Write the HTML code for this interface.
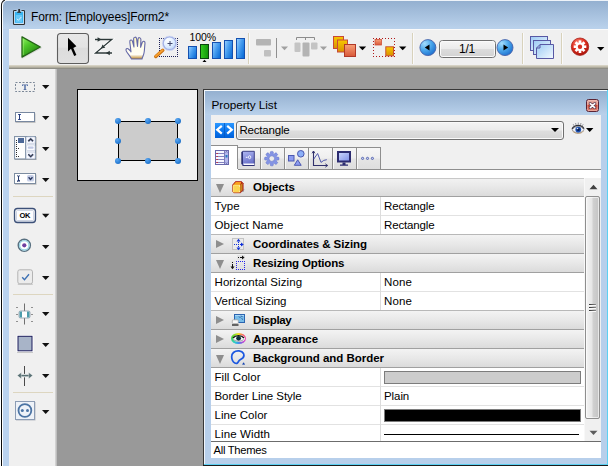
<!DOCTYPE html>
<html>
<head>
<meta charset="utf-8">
<title>Form: [Employees]Form2*</title>
<style>
*{margin:0;padding:0;box-sizing:border-box;}
html,body{width:608px;height:466px;overflow:hidden;background:#999999;}
body{position:relative;font-family:"Liberation Sans",sans-serif;font-size:12px;color:#000;}
.abs{position:absolute;}
.t{position:absolute;white-space:nowrap;line-height:14px;font-size:12px;}
.b{font-weight:bold;}
/* window frame */
#title{left:0;top:0;width:608px;height:29px;background:linear-gradient(to bottom,#eef3f9 0px,#eef3f9 1px,#94b0d0 1px,#a6c0dd 14px,#b9d1eb 28px);}
#lframe{left:0;top:0;width:9px;height:466px;background:linear-gradient(to bottom,rgba(186,210,238,0) 0,rgba(186,210,238,0) 22px,#bad2ee 30px);}
#lframe i{position:absolute;top:0;height:466px;display:block;}
/* toolbar */
#toolbar{left:9px;top:29px;width:599px;height:36px;background:#f0f0f0;border-top:1px solid #fafafa;}
#tbline{left:9px;top:65px;width:599px;height:4px;background:linear-gradient(to bottom,#d6d2c4 0,#d6d2c4 25%,#c4c0b0 25%,#c4c0b0 50%,#aeaa9c 50%,#aeaa9c 75%,#8e8e86 75%,#8e8e86 100%);}
.sep{position:absolute;top:33px;width:2px;height:31px;border-left:1px solid #d8d2bc;border-right:1px solid #fafafa;}
.dd{position:absolute;width:0;height:0;border-left:4px solid transparent;border-right:4px solid transparent;border-top:4px solid #000;}
/* left palette */
#palette{left:9px;top:69px;width:46px;height:397px;background:#f0f0f0;}
#palsep{left:55px;top:69px;width:2px;height:397px;background:linear-gradient(to right,#dcdcdc,#b4b4b4);}
.hsep{position:absolute;left:13px;width:40px;height:1px;background:#ddd6c0;}
/* form */
#form{left:77px;top:89px;width:121px;height:92px;background:#f0f0f0;border:1px solid #000;}
#rect{left:118px;top:121px;width:60px;height:40px;background:#cccccc;border:1px solid #000;}
.h{position:absolute;width:6.200px;height:6.200px;border-radius:50%;background:radial-gradient(circle at 35% 30%,#5aa6f0 0,#2b7fd6 55%,#1b62b4 100%);}
/* property palette */
#pp{left:203px;top:89px;width:405px;height:377px;background:#b7cfeb;}
#ppcontent{left:211px;top:115px;width:390px;height:343px;background:#f0f0f0;}
.row{position:absolute;left:211px;width:373px;height:19px;}
.hd{background:linear-gradient(to bottom,#f3f3f3 0,#e8e8e8 50%,#dbdbdb 100%);border-bottom:1px solid #a0a0a0;}
.pr{background:#fff;border-bottom:1px solid #e2e2e2;}
.tri-d{position:absolute;width:0;height:0;border-left:4.500px solid transparent;border-right:4.500px solid transparent;border-top:9px solid #8e8e8e;}
.tri-r{position:absolute;width:0;height:0;border-top:4.200px solid transparent;border-bottom:4.200px solid transparent;border-left:8.800px solid #8e8e8e;}
/*FIT*/
#pct{font-size:10.5px;letter-spacing:-0.090px}
#pg{font-size:12px;letter-spacing:-0.229px}
#pl{font-size:11.8px;letter-spacing:-0.064px}
#cb{font-size:11.5px;letter-spacing:-0.200px}
#h1{font-size:11.5px;letter-spacing:-0.055px}
#r1{font-size:11.5px;letter-spacing:0.066px}
#r1v{font-size:11.5px;letter-spacing:-0.144px}
#r2{font-size:11.5px;letter-spacing:0.172px}
#r2v{font-size:11.5px;letter-spacing:-0.144px}
#h2{font-size:11.5px;letter-spacing:-0.083px}
#h3{font-size:11.5px;letter-spacing:-0.164px}
#r3{font-size:11.5px;letter-spacing:0.077px}
#r3v{font-size:11.5px;letter-spacing:0.125px}
#r4{font-size:11.5px;letter-spacing:-0.016px}
#r4v{font-size:11.5px;letter-spacing:0.125px}
#h4{font-size:11.5px;letter-spacing:-0.375px}
#h5{font-size:11.5px;letter-spacing:-0.084px}
#h6{font-size:11.5px;letter-spacing:-0.031px}
#r5{font-size:11.5px;letter-spacing:0.073px}
#r6{font-size:11.5px;letter-spacing:-0.072px}
#r6v{font-size:11.5px;letter-spacing:-0.076px}
#r7{font-size:11.5px;letter-spacing:0.058px}
#r8{font-size:11.5px;letter-spacing:0.116px}
#at{font-size:11.2px;letter-spacing:-0.277px}
#ttl{font-size:12px;letter-spacing:-0.089px}
/*ENDFIT*/</style>
</head>
<body>
<div id="title" class="abs"></div>
<div id="lframe" class="abs"><i style="left:0;width:1px;background:#fff"></i><i style="left:1px;width:1px;background:#0a0a0a"></i><i style="left:2px;width:1px;background:#fdfeff"></i></div>
<div id="toolbar" class="abs"></div>
<div id="tbline" class="abs"></div>
<div id="palette" class="abs"></div>
<div id="palsep" class="abs"></div>
<div id="form" class="abs"></div>
<div id="rect" class="abs"></div>
<div id="pp" class="abs"></div>
<div id="ppcontent" class="abs"></div>

<!-- toolbar items -->
<svg class="abs" style="left:9px;top:29px" width="599" height="36" viewBox="9 29 599 36">
<defs>
<linearGradient id="gplay" x1="0" y1="0" x2="0.700" y2="1"><stop offset="0" stop-color="#98f868"/><stop offset="0.400" stop-color="#50c82c"/><stop offset="1" stop-color="#1c7c0c"/></linearGradient>
<linearGradient id="gbtn" x1="0" y1="0" x2="0" y2="1"><stop offset="0" stop-color="#e8e8e8"/><stop offset="0.450" stop-color="#e3e3e3"/><stop offset="0.500" stop-color="#dcdcdc"/><stop offset="1" stop-color="#e0e0e0"/></linearGradient>
<linearGradient id="gbar" x1="0" y1="0" x2="1" y2="0.700"><stop offset="0" stop-color="#9cd2ff"/><stop offset="0.500" stop-color="#489ef0"/><stop offset="1" stop-color="#1070d8"/></linearGradient>
<linearGradient id="ggreen" x1="0" y1="0" x2="1" y2="0"><stop offset="0" stop-color="#34cc20"/><stop offset="1" stop-color="#0e9408"/></linearGradient>
<linearGradient id="gyel" x1="0" y1="0" x2="0" y2="1"><stop offset="0" stop-color="#f8c800"/><stop offset="1" stop-color="#d89000"/></linearGradient>
<linearGradient id="gora" x1="0" y1="0" x2="0" y2="1"><stop offset="0" stop-color="#f8a078"/><stop offset="1" stop-color="#d85838"/></linearGradient>
<radialGradient id="gball" cx="0.300" cy="0.250" r="0.900"><stop offset="0" stop-color="#a4dcfc"/><stop offset="0.450" stop-color="#4ca8ec"/><stop offset="1" stop-color="#1464c8"/></radialGradient>
<radialGradient id="gred" cx="0.4" cy="0.3" r="0.75"><stop offset="0" stop-color="#ff9080"/><stop offset="0.5" stop-color="#e03020"/><stop offset="1" stop-color="#a01008"/></radialGradient>
<linearGradient id="gfield" x1="0" y1="0" x2="0" y2="1"><stop offset="0" stop-color="#f6f6f6"/><stop offset="0.48" stop-color="#ebebeb"/><stop offset="0.52" stop-color="#dcdcdc"/><stop offset="1" stop-color="#d2d2d2"/></linearGradient>
<linearGradient id="gpage" x1="0" y1="0" x2="1" y2="1"><stop offset="0" stop-color="#9ccaf4"/><stop offset="1" stop-color="#f4faff"/></linearGradient>
</defs>
<!-- play -->
<path d="M22.200 37.200 L22.200 57.500 L40.800 47.700 Z" fill="#999" stroke="#aaa" stroke-width="2" stroke-linejoin="round" opacity="0.350"/><path d="M22 36.900 L22 57.100 L40.300 47 Z" fill="url(#gplay)" stroke="#226414" stroke-width="1.200" stroke-linejoin="round"/><path d="M23.300 38.800 V55" stroke="#a8f080" stroke-width="0.800" opacity="0.700"/>
<!-- selected button -->
<rect x="57.500" y="33.500" width="31" height="30" rx="3.200" fill="url(#gbtn)" stroke="#5e5e5e" stroke-width="1.100"/>
<path d="M68 37.800 V51.500 L71 48.700 L74.200 56 L76.400 55 L73.300 47.900 L76.400 46.300 Z" fill="#000"/>
<!-- Z entry order -->
<g stroke="#ffffff" stroke-width="2.600" fill="none" opacity="0.900"><path d="M95 39.500 H111.800 L95.600 53 H112"/></g>
<g stroke="#2c3838" stroke-width="1.300" fill="none"><path d="M95 39.500 H111.800 L95.600 53 H112"/></g>
<path d="M97.600 37.200 L101.500 39.500 L97.600 41.800 Z M109.800 50.700 L105.900 53 L109.800 55.300 Z M105.300 47.800 L101 48.500 L102.500 44.400 Z" fill="#2c3838"/>
<!-- hand -->
<linearGradient id="ghand" x1="0" y1="0" x2="0" y2="1"><stop offset="0" stop-color="#fff6b0"/><stop offset="0.350" stop-color="#fffde8"/><stop offset="0.800" stop-color="#fffdf6"/><stop offset="0.930" stop-color="#d4b070"/><stop offset="1" stop-color="#a47c34"/></linearGradient>
<path d="M131.500 59 C130 56 128 54 126.500 51.500 C125.300 49.500 126.300 48 128 48.800 C129.300 49.500 130 50.500 131 51.800 L129.800 42 C129.500 39.800 132 39.300 132.500 41.300 L134 47 L133.600 39 C133.500 36.700 136.300 36.500 136.600 38.800 L137.500 46.500 L138 39.300 C138.200 37 140.900 37.200 140.900 39.500 L140.600 47.200 L142.200 42.500 C142.900 40.500 145.400 41.200 145 43.300 C144.500 46.500 144.700 50 144 53 C143.500 55.500 142.500 57 142 59 Z" fill="url(#ghand)" stroke="#6468a8" stroke-width="1.100" stroke-linejoin="round"/>
<!-- magnifier -->
<g stroke="#1c2058" stroke-width="1" stroke-dasharray="1 1" fill="none"><path d="M159 38.500 H178 M159 56.500 H178 M159.500 38 V57 M177.500 38 V57"/></g>
<path d="M155.800 56.500 L162.800 50.300" stroke="#c87010" stroke-width="3.400" stroke-linecap="round"/>
<path d="M155.800 56.200 L162.600 50.200" stroke="#f8a030" stroke-width="1.800" stroke-linecap="round"/>
<radialGradient id="glens" cx="0.350" cy="0.300" r="0.800"><stop offset="0" stop-color="#ffffff"/><stop offset="0.600" stop-color="#dcecff"/><stop offset="1" stop-color="#b0ccf4"/></radialGradient>
<circle cx="169.600" cy="43.300" r="6.600" fill="url(#glens)" stroke="#a4b2e6" stroke-width="1.600"/>
<circle cx="169.500" cy="43.300" r="7.300" fill="none" stroke="#d8e0f4" stroke-width="0.700"/>
<path d="M167.500 43.500 H172.500 M170 41 V46" stroke="#404870" stroke-width="1"/>
<!-- zoom bars -->
<g stroke="#1450b0" stroke-width="1">
<rect x="188.500" y="46.5" width="8" height="12" fill="url(#gbar)"/>
<rect x="212.500" y="42.5" width="8" height="16" fill="url(#gbar)"/>
<rect x="224.500" y="40.500" width="8" height="18" fill="url(#gbar)"/>
<rect x="236.500" y="38.5" width="8" height="20" fill="url(#gbar)"/>
</g>
<rect x="200.500" y="44.500" width="8" height="14" fill="url(#ggreen)" stroke="#0a4410" stroke-width="1"/>
<path d="M202.500 62 L204.500 59.800 L206.500 62 Z" fill="#000"/>
<!-- align disabled -->
<rect x="256" y="39" width="15" height="6.500" rx="1" fill="#b4b4b4"/>
<rect x="264" y="50" width="7" height="6.500" rx="1" fill="#c0c0c0"/>
<path d="M276.500 38 V58" stroke="#909090" stroke-width="1"/>
<path d="M281 46.500 h7 l-3.500 3.800 z" fill="#a0a0a0"/>
<!-- distribute disabled -->
<path d="M296.500 40 V37.500 H314.500 V40 M305.500 37.500 V40" stroke="#8c8c8c" fill="none"/>
<rect x="294.500" y="42.500" width="6" height="9.500" rx="1" fill="#c4c4c4"/>
<rect x="302.500" y="42.500" width="7" height="14" rx="1" fill="#b4b4b4"/>
<rect x="311" y="42.500" width="6.500" height="7" rx="1" fill="#c4c4c4"/>
<path d="M320 46.500 h7 l-3.500 3.800 z" fill="#a0a0a0"/>
<!-- stack -->
<rect x="333.500" y="36.500" width="10" height="12" fill="url(#gyel)" stroke="#c84838"/>
<rect x="337.500" y="40" width="10" height="12" fill="url(#gyel)" stroke="#c84838"/>
<rect x="344.500" y="44.500" width="11" height="12" fill="url(#gora)" stroke="#b03828"/>
<path d="M358.800 46.500 h7.400 l-3.700 3.800 z" fill="#000"/>
<!-- group -->
<g stroke="#b01818" stroke-width="1" stroke-dasharray="1 2" fill="none"><path d="M373 38.500 H395 M373 56.500 H395 M373.500 38 V57 M394.500 38 V57"/></g>
<rect x="375" y="39.500" width="6.500" height="5.500" fill="url(#gora)" stroke="#d05038" stroke-width="0.800"/>
<rect x="385.800" y="46.800" width="7.700" height="9" fill="url(#gyel)" stroke="#c85030" stroke-width="1"/>
<path d="M399 46.500 h7.400 l-3.700 3.800 z" fill="#000"/>
<!-- nav -->
<circle cx="427.900" cy="47.600" r="8" fill="url(#gball)" stroke="#4a62a8" stroke-width="0.900"/>
<path d="M429.500 44.400 V50.600 L424.800 47.500 Z" fill="#000"/>
<rect x="439.500" y="40.500" width="56" height="17" rx="3" fill="url(#gfield)" stroke="#707070"/><rect x="440.500" y="41.500" width="54" height="15" rx="2" fill="none" stroke="#fbfbfb"/>
<circle cx="505" cy="47.600" r="8" fill="url(#gball)" stroke="#4a62a8" stroke-width="0.900"/>
<path d="M503.500 44.400 V50.600 L508.200 47.500 Z" fill="#000"/>
<!-- pages -->
<g stroke="#5858a4" stroke-width="1">
<rect x="530.500" y="36.500" width="17" height="14" fill="url(#gpage)"/>
<rect x="533.500" y="40.500" width="17" height="14" fill="url(#gpage)"/>
<path d="M536.500 48 L540 44.500 H553.500 V58.500 H536.500 Z" fill="url(#gpage)"/>
<path d="M536.500 48 H540 V44.500" fill="none"/>
</g>
<!-- red gear -->
<circle cx="580" cy="46.700" r="8.700" fill="url(#gred)" stroke="#a82018" stroke-width="0.800"/>
<g transform="translate(580 46.700)" fill="#fff">
<g id="teeth"><rect x="-1.300" y="-6.300" width="2.600" height="12.600"/><rect x="-1.300" y="-6.300" width="2.600" height="12.600" transform="rotate(45)"/><rect x="-1.300" y="-6.300" width="2.600" height="12.600" transform="rotate(90)"/><rect x="-1.300" y="-6.300" width="2.600" height="12.600" transform="rotate(135)"/></g>
<circle r="4.300"/><circle r="2.200" fill="#d83020"/>
</g>
<path d="M597 47 h7.400 l-3.700 3.800 z" fill="#000"/>
</svg>
<div class="sep" style="left:248px"></div>
<div class="sep" style="left:412px"></div>
<div class="sep" style="left:522px"></div>
<div class="sep" style="left:561px"></div>
<span class="t" id="pct" style="left:189.500px;top:31px;line-height:12px;">100%</span>
<span class="t" id="pg" style="left:459px;top:42px;">1/1</span>

<!-- title icon -->
<svg class="abs" style="left:0;top:0" width="9" height="9" viewBox="0 0 9 9">
<path d="M0 0 H5.500 Q1.500 1 1.500 5.500 V9 H0 Z" fill="#fff"/>
<path d="M1.500 9 V5.500 Q1.500 1.200 5 0" stroke="#1c1c1c" stroke-width="1.100" fill="none"/>
<path d="M2.500 9 V5.800 Q2.600 2 6 0.500" stroke="#fdfeff" stroke-width="0.900" fill="none"/>
</svg>
<svg class="abs" style="left:11px;top:7px" width="17" height="21" viewBox="11 7 17 21">
<rect x="12.500" y="9.500" width="13" height="16" rx="2" fill="#b4d0ec" opacity="0.600"/>
<rect x="14" y="11" width="10" height="13.500" fill="#c4e2f8"/>
<rect x="15" y="11.800" width="8" height="11" fill="#38b4f0"/>
<rect x="16" y="15" width="6" height="7" fill="#68c8f6"/>
<path d="M16.500 10.500 H14.300 Q13.500 10.500 13.500 11.300 V23.700 Q13.500 24.500 14.300 24.500 H23.700 Q24.500 24.500 24.500 23.700 V11.300 Q24.500 10.500 23.700 10.500 H21.500" fill="none" stroke="#303030" stroke-width="1.100"/>
<path d="M17.200 12.300 H21.100" stroke="#303030" stroke-width="1.100"/>
<path d="M19.150 9 V12" stroke="#303030" stroke-width="1.800"/>
<path d="M16.800 18.800 L18.400 20.300 L21.300 17" stroke="#d8f0ff" stroke-width="1" fill="none"/>
</svg>
<!-- left palette icons -->
<svg class="abs" style="left:9px;top:69px" width="47" height="397" viewBox="9 69 47 397">
<defs>
<linearGradient id="gokb" x1="0" y1="0" x2="0" y2="1"><stop offset="0" stop-color="#ffffff"/><stop offset="1" stop-color="#dfe4ee"/></linearGradient>
</defs>
<!-- static text -->
<rect x="15.500" y="82.500" width="19" height="9" fill="none" stroke="#7c8898" stroke-dasharray="2 1.500"/>
<path d="M22 84.500 H28 V86 H27.300 L27 85.300 H25.700 V89.300 L26.500 89.600 V90 H23.500 V89.600 L24.300 89.300 V85.300 H23 L22.700 86 H22 Z" fill="#4c68a0"/>
<!-- input -->
<rect x="15.500" y="113.500" width="20" height="9.500" fill="#b4b4b4" opacity="0.800"/>
<rect x="15.500" y="112.500" width="19" height="9" fill="#fff" stroke="#7888a0"/>
<path d="M18 114.500 h3 M18 119.500 h3" stroke="#4058a0" stroke-width="1"/><path d="M19.500 114 v6" stroke="#283c7c" stroke-width="1"/>
<!-- list -->
<rect x="15" y="137" width="21.500" height="23" fill="#a4a4a4"/>
<rect x="14.500" y="136.500" width="21" height="22.500" fill="#e4e8f0" stroke="#8494a8"/>
<rect x="15.500" y="137.500" width="9.500" height="20.500" fill="#fefefe"/>
<path d="M25.500 137 v22" stroke="#8c9cb0" stroke-width="1"/>
<rect x="18" y="138" width="6" height="5" fill="#4c6898"/>
<path d="M16.500 140 v17" stroke="#2c2c2c" stroke-dasharray="1 1"/>
<rect x="18" y="148" width="1" height="1" fill="#2c2c2c"/><rect x="18" y="156" width="1" height="1" fill="#2c2c2c"/>
<rect x="26.500" y="137" width="8.500" height="6.300" rx="1" fill="#fbfcff" stroke="#c4cce0" stroke-width="0.600"/>
<rect x="26.500" y="145" width="8.500" height="5.500" rx="1" fill="#fbfcff" stroke="#c4cce0" stroke-width="0.600"/>
<rect x="26.500" y="152.300" width="8.500" height="6.300" rx="1" fill="#fbfcff" stroke="#c4cce0" stroke-width="0.600"/>
<path d="M28.300 141.300 L30.700 139 L33.100 141.300 M28.300 154.300 L30.700 156.600 L33.100 154.300" stroke="#c0c8e8" stroke-width="2.600" fill="none"/>
<path d="M28.300 141.300 L30.700 139 L33.100 141.300 M28.300 154.300 L30.700 156.600 L33.100 154.300" stroke="#303848" stroke-width="1.300" fill="none"/>
<rect x="27.800" y="146.600" width="5.800" height="2.200" rx="1" fill="#c0c8e4"/>
<!-- combo -->
<rect x="15" y="174.500" width="21.500" height="10.300" fill="#b0b0b0" opacity="0.800"/>
<rect x="14.500" y="173.500" width="21" height="10" fill="#fff" stroke="#7c8ca0"/>
<path d="M17 175.500 l1 0.700 h1 l1 -0.700 M17 181.500 l1 -0.700 h1 l1 -0.700 M17 181.500 l1 -0.700 M20 181.500 l-1 -0.700" stroke="#283c70" stroke-width="0.900" fill="none"/>
<path d="M18.500 176 v5.300" stroke="#283c70" stroke-width="1"/>
<rect x="27" y="175" width="7" height="6.500" rx="1.500" fill="#c8d0e8"/>
<path d="M28.600 177.300 L30.500 179.400 L32.500 177.300" stroke="#283860" stroke-width="1.400" fill="none"/>
<!-- OK button -->
<rect x="14.500" y="208.500" width="21" height="14" rx="3" fill="url(#gokb)" stroke="#3c5078" stroke-width="1.300"/><rect x="16.500" y="210.500" width="17" height="10" rx="1" fill="#fdfdff" stroke="#c4ccdc" stroke-width="0.800"/>
<!-- radio -->
<circle cx="24.300" cy="245.300" r="6.100" fill="#e8f4f8" stroke="#587080" stroke-width="1.400"/>
<circle cx="24.300" cy="245.300" r="4.700" fill="#fff" stroke="#98d4e4" stroke-width="1.300"/>
<circle cx="24.300" cy="245.300" r="2.100" fill="#7040a0"/>
<!-- checkbox -->
<rect x="17.800" y="269.800" width="14.700" height="14" rx="2" fill="#ececec" stroke="#b4b4b4"/>
<path d="M17.800 284.300 h15" stroke="#c0c0c0" stroke-width="1"/><path d="M22.200 277.200 L24.500 279.800 L29 274.300" stroke="#3c70b4" stroke-width="1.350" fill="none"/>
<!-- slider -->
<path d="M24.500 303.500 V324.500" stroke="#707070" stroke-width="1"/>
<path d="M16 307.500 h2 M16 314.500 h2 M16 321.500 h2 M31 307.500 h2 M31 314.500 h2 M31 321.500 h2" stroke="#909090"/>
<rect x="19" y="311" width="11" height="7" rx="1.500" fill="#fff" stroke="#8c98a4" stroke-width="0.800"/>
<rect x="19.500" y="311.500" width="2.500" height="6" fill="#4c9cac"/><rect x="27" y="311.500" width="2.500" height="6" fill="#4c9cac"/>
<!-- square -->
<rect x="16.500" y="335" width="17" height="17.500" rx="1" fill="#fff"/>
<rect x="18" y="336.300" width="14" height="14.500" fill="#a8b4c8" stroke="#1c1c5c" stroke-width="1"/>
<path d="M17 352.500 h16" stroke="#c8c8c8"/>
<!-- splitter -->
<path d="M24.500 366 V386" stroke="#484848" stroke-width="1"/>
<path d="M18 375.600 H32" stroke="#f8f8f8" stroke-width="3.400"/><path d="M19 375.600 H31" stroke="#587074" stroke-width="1.700"/>
<path d="M17.300 375.600 l4 -3.200 v6.400 z M32.700 375.600 l-4 -3.200 v6.400 z" fill="#587074" stroke="#f4f4f4" stroke-width="0.400"/>
<!-- plugin -->
<rect x="16" y="402" width="19.500" height="18.500" fill="#b8bcc4"/><rect x="15.500" y="401.500" width="19" height="18" fill="#eef2f8" stroke="#8c9cb4"/>
<circle cx="24.900" cy="410.500" r="6.400" fill="none" stroke="#4c74a4" stroke-width="1.800"/>
<circle cx="22.300" cy="410.500" r="1.500" fill="#4c74a4"/><circle cx="27.500" cy="410.500" r="1.500" fill="#4c74a4"/>
<!-- arrows -->
<g fill="#111">
<path d="M42 85 h7.400 l-3.700 4 z"/>
<path d="M42 116 h7.400 l-3.700 4 z"/>
<path d="M42 147 h7.400 l-3.700 4 z"/>
<path d="M42 178 h7.400 l-3.700 4 z"/>
<path d="M42 213.800 h7.400 l-3.700 4 z"/>
<path d="M42 245 h7.400 l-3.700 4 z"/>
<path d="M42 276 h7.400 l-3.700 4 z"/>
<path d="M42 312 h7.400 l-3.700 4 z"/>
<path d="M42 343 h7.400 l-3.700 4 z"/>
<path d="M42 374 h7.400 l-3.700 4 z"/>
<path d="M42 410 h7.400 l-3.700 4 z"/>
</g>
</svg>
<div class="hsep" style="top:196px"></div>
<div class="hsep" style="top:294px"></div>
<div class="hsep" style="top:392px"></div>
<span class="t b" id="ok" style="left:19.500px;top:209.500px;font-size:7.500px;line-height:12px;letter-spacing:-0.350px">OK</span>
<!-- handles -->
<div class="h" style="left:115.1px;top:118.0px"></div><div class="h" style="left:145.1px;top:118.0px"></div><div class="h" style="left:175.0px;top:118.0px"></div><div class="h" style="left:115.1px;top:138.0px"></div><div class="h" style="left:175.0px;top:138.0px"></div><div class="h" style="left:115.1px;top:157.9px"></div><div class="h" style="left:145.1px;top:157.9px"></div><div class="h" style="left:175.0px;top:157.9px"></div>
<!-- property palette chrome -->
<div class="abs" style="left:203px;top:89px;width:405px;height:1px;background:#383838"></div>
<div class="abs" style="left:203px;top:89px;width:1px;height:377px;background:#383838"></div>
<div class="abs" style="left:204px;top:90px;width:404px;height:1px;background:#f6f9fc"></div>
<div class="abs" style="left:204px;top:90px;width:1px;height:375px;background:#f0f5fb"></div>
<div class="abs" style="left:205px;top:91px;width:403px;height:24px;background:linear-gradient(to bottom,#94b0d0 0,#a6c0dd 50%,#b9d1eb 100%)"></div>
<div class="abs" style="left:204px;top:464px;width:404px;height:1px;background:#5cd0f2"></div><div class="abs" style="left:203px;top:465px;width:405px;height:1px;background:#1c1c1c"></div>
<div class="abs" style="left:607px;top:90px;width:1px;height:375px;background:#5cd0f2"></div>
<span class="t" id="pl" style="left:211.500px;top:98.300px;">Property List</span>
<!-- close -->
<div class="abs" style="left:586px;top:99px;width:13px;height:13px;border:1px solid #5c2434;border-radius:2.500px;background:linear-gradient(to bottom,#e8b4ac 0,#dc8c80 40%,#c84838 50%,#d46c5c 80%,#e49888 100%);box-shadow:inset 0 0 0 1px rgba(255,210,200,0.350)"></div>
<svg class="abs" style="left:586px;top:99px" width="13" height="13"><path d="M4.300 4.600 L8.700 8.600 M8.700 4.600 L4.300 8.600" stroke="#5c3c50" stroke-width="2.900" stroke-linecap="round"/><path d="M4.300 4.600 L8.700 8.600 M8.700 4.600 L4.300 8.600" stroke="#fff" stroke-width="1.500" stroke-linecap="round"/></svg>
<!-- combo -->
<div class="abs" style="left:215px;top:123px;width:19px;height:15px;background:linear-gradient(to bottom,#2c98ff 0,#0c78f0 50%,#0060d8 100%)"></div>
<svg class="abs" style="left:215px;top:123px" width="19" height="15"><path d="M9.500 0 V15" stroke="#0858c0" stroke-width="0.800"/><path d="M6.800 2.800 L2.200 6.700 L6.800 10.600 M12.200 2.800 L16.800 6.700 L12.200 10.600" stroke="#fff" stroke-width="2.200" fill="none"/></svg>
<div class="abs" style="left:236px;top:121px;width:328px;height:19px;border:1px solid #707070;border-radius:3px;background:linear-gradient(to bottom,#f4f4f4 0,#ebebeb 48%,#dedede 52%,#d4d4d4 100%);box-shadow:inset 0 0 0 1px #fafafa"></div>
<span class="t" id="cb" style="left:239.500px;top:123px;">Rectangle</span>
<div class="dd" style="left:551px;top:128px"></div>
<svg class="abs" style="left:571px;top:121px" width="26" height="16" viewBox="571 121 26 16">
<path d="M572 129.800 C575 125.500 581.500 125.500 584 129.800 C581 133.800 575 133.800 572 129.800Z" fill="#f4f4f8" stroke="#707480" stroke-width="0.700"/>
<path d="M572.500 131 C575.500 134.300 581 134.300 583.500 131" stroke="#b89870" stroke-width="0.900" fill="none"/>
<circle cx="578.300" cy="129.600" r="2.900" fill="#1c50b0"/><circle cx="578.300" cy="129.600" r="1.500" fill="#082058"/><circle cx="577.500" cy="128.500" r="0.800" fill="#d8e8ff"/>
<path d="M572 128.800 C575 124.300 581.500 124.300 584 128.800" stroke="#303038" stroke-width="1.200" fill="none"/>
<path d="M574 125.800 l-0.800 -1.600 M576 124.800 l-0.400 -1.800 M578.300 124.500 v-1.900 M580.500 124.800 l0.500 -1.800 M582.300 125.800 l0.900 -1.500" stroke="#50505c" stroke-width="0.600"/>
<path d="M586 128 h7.400 l-3.700 4 z" fill="#000"/>
</svg>
<!-- tabs -->
<div class="abs" style="left:211px;top:169px;width:390px;height:1px;background:#8e8e8e"></div>
<div class="abs" style="left:211px;top:170px;width:390px;height:8px;background:#fff"></div>
<div class="abs" id="tabs" style="left:237px;top:147px;width:144px;height:22px;border:1px solid #8e8e8e;border-bottom:none;background:linear-gradient(to bottom,#f6f6f6 0,#efefef 45%,#e4e4e4 55%,#dedede 100%)"></div>
<div class="abs" style="left:260px;top:148px;width:2px;height:21px;border-left:1px solid #8e8e8e;background:#f8f8f8"></div>
<div class="abs" style="left:284px;top:148px;width:2px;height:21px;border-left:1px solid #8e8e8e;background:#f8f8f8"></div>
<div class="abs" style="left:308px;top:148px;width:2px;height:21px;border-left:1px solid #8e8e8e;background:#f8f8f8"></div>
<div class="abs" style="left:332px;top:148px;width:2px;height:21px;border-left:1px solid #8e8e8e;background:#f8f8f8"></div>
<div class="abs" style="left:356px;top:148px;width:2px;height:21px;border-left:1px solid #8e8e8e;background:#f8f8f8"></div>
<div class="abs" style="left:211px;top:145px;width:27px;height:26px;background:#fff;border-top:1px solid #8e8e8e"></div><div class="abs" style="left:237px;top:145px;width:1px;height:24px;background:#8e8e8e"></div>
<svg class="abs" style="left:211px;top:145px" width="172" height="25" viewBox="211 145 172 25">
<defs>
<linearGradient id="gbook" x1="0" y1="0" x2="1" y2="1"><stop offset="0" stop-color="#98a4f0"/><stop offset="1" stop-color="#5c68c8"/></linearGradient>
<linearGradient id="gmon" x1="0" y1="0" x2="1" y2="1"><stop offset="0" stop-color="#c8d4fc"/><stop offset="1" stop-color="#8494e8"/></linearGradient>
</defs>
<!-- list icon -->
<rect x="215.500" y="150.500" width="13" height="14" fill="#f6f6ff" stroke="#6868ac" stroke-width="1"/>
<path d="M216 153.500 h9 M216 156.500 h9 M216 159.500 h9 M216 162.500 h9" stroke="#8484c0" stroke-width="1"/>
<rect x="225" y="151" width="3" height="13" fill="#b4b8ec"/>
<path d="M224.500 151 v13" stroke="#7c7cb8" stroke-width="1"/>
<rect x="225.500" y="155" width="2" height="2.500" fill="#2878c4"/>
<path d="M225.700 152.500 l0.800 -1 l0.800 1 M225.700 162.500 l0.800 1 l0.800 -1" stroke="#40408c" stroke-width="0.600" fill="none"/>
<path d="M216.500 153.500 h1.200 M216.500 156.500 h1.200 M216.500 159.500 h1.200 M216.500 162.500 h1.200" stroke="#d81818" stroke-width="1.200"/>
<!-- book -->
<linearGradient id="gbook2" x1="0" y1="0" x2="0.300" y2="1"><stop offset="0" stop-color="#b0b8f4"/><stop offset="1" stop-color="#6870c8"/></linearGradient>
<path d="M242 152 Q242 151.300 243 151.300 H254.300 V165.300 H243.500 Q242 165.300 242 163.800 Z" fill="url(#gbook2)" stroke="#30347c" stroke-width="0.900"/>
<path d="M242.200 152 V164" stroke="#23276c" stroke-width="1.300"/>
<path d="M243.300 163.400 H254.300 V165 H243.800 Z" fill="#fafaff"/>
<path d="M242.500 165.500 H254.500" stroke="#23276c" stroke-width="0.800"/>
<path d="M245.800 157.300 h1.800" stroke="#f4f6ff" stroke-width="1.100"/>
<ellipse cx="249.600" cy="157.200" rx="1.150" ry="1.500" fill="none" stroke="#f4f6ff" stroke-width="0.900"/>
<!-- gear -->
<g transform="translate(271.800 158.600)" fill="#8494e4" stroke="#6070c8" stroke-width="0.500">
<rect x="-1.500" y="-7.200" width="3" height="14.400" rx="0.900"/><rect x="-1.500" y="-7.200" width="3" height="14.400" rx="0.900" transform="rotate(45)"/><rect x="-1.500" y="-7.200" width="3" height="14.400" rx="0.900" transform="rotate(90)"/><rect x="-1.500" y="-7.200" width="3" height="14.400" rx="0.900" transform="rotate(135)"/>
<circle r="5.200" stroke="none"/><circle r="2.800" fill="#ebebeb" stroke="#6070c8" stroke-width="0.600"/>
</g>
<!-- shapes -->
<rect x="288.500" y="155.500" width="5.500" height="5.500" fill="#8c9cf0" stroke="#4c58b0"/>
<circle cx="300.800" cy="153.800" r="3.300" fill="#8cb0f8" stroke="#4c58b0"/>
<path d="M297.700 159.800 L301.200 165.300 H294.300 Z" fill="#8c9cf0" stroke="#4c58b0"/>
<!-- graph -->
<path d="M313.500 151 V165.500 H327.500" stroke="#30306c" fill="none" stroke-width="1.100"/>
<path d="M312 153.300 l1.500 -2.300 l1.500 2.300 M325.300 163.800 l2.400 1.700 l-2.400 1.700" stroke="#30306c" fill="none" stroke-width="0.900"/>
<path d="M313.800 159 L317.600 153.500 L321 162.400 L323.800 160.400 L326.800 159.700" stroke="#5058ac" fill="none" stroke-width="1"/>
<!-- monitor -->
<rect x="337.500" y="151.500" width="13" height="10.500" fill="#2c2c70" stroke="#2c2c70"/>
<rect x="339" y="153" width="10" height="7.500" fill="url(#gmon)"/>
<path d="M342.500 162.500 h3 v2 h2.500 v1.200 h-8 v-1.200 h2.500 z" fill="#2c2c70"/>
<!-- dots -->
<circle cx="362.600" cy="158.400" r="1.100" fill="#c8d0f0" stroke="#4c5cac" stroke-width="0.900"/><circle cx="367.500" cy="158.400" r="1.100" fill="#c8d0f0" stroke="#4c5cac" stroke-width="0.900"/><circle cx="372.400" cy="158.400" r="1.100" fill="#c8d0f0" stroke="#4c5cac" stroke-width="0.900"/>
</svg>
<!-- list -->
<div class="abs" style="left:211px;top:178px;width:373px;height:263px;background:#fff;overflow:hidden"></div>
<div class="row hd" style="top:178px"></div><div class="tri-d" style="left:216.300px;top:184.4px"></div><span class="t b" id="h1" style="left:253px;top:180px">Objects</span>
<div class="row pr" style="top:197px"></div><span class="t" id="r1" style="left:214.500px;top:199px">Type</span><span class="t" id="r1v" style="left:384px;top:199px">Rectangle</span>
<div class="row pr" style="top:216px"></div><span class="t" id="r2" style="left:214.500px;top:218px">Object Name</span><span class="t" id="r2v" style="left:384px;top:218px">Rectangle</span>
<div class="row hd" style="top:235px"></div><div class="tri-r" style="left:216.300px;top:240.2px"></div><span class="t b" id="h2" style="left:253px;top:237px">Coordinates &amp; Sizing</span>
<div class="row hd" style="top:254px"></div><div class="tri-d" style="left:216.300px;top:260.4px"></div><span class="t b" id="h3" style="left:253px;top:256px">Resizing Options</span>
<div class="row pr" style="top:273px"></div><span class="t" id="r3" style="left:214.500px;top:275px">Horizontal Sizing</span><span class="t" id="r3v" style="left:384px;top:275px">None</span>
<div class="row pr" style="top:292px"></div><span class="t" id="r4" style="left:214.500px;top:294px">Vertical Sizing</span><span class="t" id="r4v" style="left:384px;top:294px">None</span>
<div class="row hd" style="top:311px"></div><div class="tri-r" style="left:216.300px;top:316.2px"></div><span class="t b" id="h4" style="left:253px;top:313px">Display</span>
<div class="row hd" style="top:330px"></div><div class="tri-r" style="left:216.300px;top:335.2px"></div><span class="t b" id="h5" style="left:253px;top:332px">Appearance</span>
<div class="row hd" style="top:349px"></div><div class="tri-d" style="left:216.300px;top:355.4px"></div><span class="t b" id="h6" style="left:253px;top:351px">Background and Border</span>
<div class="row pr" style="top:368px"></div><span class="t" id="r5" style="left:214.500px;top:370px">Fill Color</span>
<div class="row pr" style="top:387px"></div><span class="t" id="r6" style="left:214.500px;top:389px">Border Line Style</span><span class="t" id="r6v" style="left:384px;top:389px">Plain</span>
<div class="row pr" style="top:406px"></div><span class="t" id="r7" style="left:214.500px;top:408px">Line Color</span>
<div class="row pr" style="top:425px"></div><span class="t" id="r8" style="left:214.500px;top:427px">Line Width</span>
<div class="abs" style="left:211px;top:178px;width:373px;height:1px;background:#c8c8c8"></div>
<div class="abs" style="left:211px;top:234px;width:373px;height:1px;background:#b8b8b8"></div><div class="abs" style="left:211px;top:310px;width:373px;height:1px;background:#b8b8b8"></div>
<div class="abs" style="left:380px;top:197px;width:1px;height:37px;background:#dcdcdc"></div>
<div class="abs" style="left:380px;top:273px;width:1px;height:37px;background:#dcdcdc"></div>
<div class="abs" style="left:380px;top:368px;width:1px;height:73px;background:#dcdcdc"></div>
<!-- value swatches -->
<div class="abs" style="left:384px;top:371px;width:197px;height:13px;background:#cccccc;border:1px solid #7c7c7c"></div>
<div class="abs" style="left:384px;top:409px;width:197px;height:13px;background:#000;border:1px solid #7c7c7c"></div>
<div class="abs" style="left:384px;top:434px;width:195px;height:1px;background:#000"></div>
<!-- header icons -->
<svg class="abs" style="left:230px;top:178px" width="18" height="190" viewBox="230 178 18 190">
<!-- cube -->
<path d="M241 191.500 l3.500 -2.500 l-1 3 z" fill="#7c7c7c" opacity="0.700"/>
<path d="M232.500 185 L235.500 181.500 H241.500 L243.200 183.300 V190 L240.500 192.800 H233.800 L232.500 191.500 Z" fill="#b01c14" stroke="#a81810" stroke-width="0.600"/>
<path d="M233 185.200 L235.800 182 H241.300 L240 185.200 Z" fill="#f8a01c"/>
<rect x="232.800" y="185" width="7.400" height="7.400" rx="0.800" fill="#fbd450"/>
<path d="M233 185.300 h7 M233.300 185.300 v6.800" stroke="#fde888" stroke-width="0.700" fill="none"/>
<path d="M240.200 185.200 L242.500 182.800 V189.800 L240.200 192.300 Z" fill="#c88820"/>
<rect x="239" y="185.600" width="0.900" height="0.900" fill="#fff"/><rect x="239" y="190.800" width="0.900" height="0.900" fill="#fff8d0"/>
<!-- coordinates -->
<rect x="232.500" y="238.500" width="11" height="11" fill="#ebebeb" stroke="#c4c4c4" stroke-width="1"/>
<g stroke="#1030d8" stroke-width="1" stroke-dasharray="1 1" fill="none"><path d="M238.500 240 V249 M234 244.500 H243"/></g>
<rect x="238" y="244" width="1" height="1" fill="#1030d8"/>
<path d="M236.500 241.500 L238.500 238.800 L240.500 241.500Z M236.500 247.500 L238.500 250.200 L240.500 247.500Z M241 242.500 L243.800 244.500 L241 246.500Z" fill="#1030d8"/>
<!-- resizing -->
<rect x="237" y="255" width="8" height="5" fill="#e4e4e4"/>
<rect x="230" y="261" width="5" height="9" fill="#e4e4e4"/>
<g stroke="#2828e8" stroke-width="1" stroke-dasharray="1 1" fill="none"><path d="M236 261.500 H245 M236 269.500 H245 M236.500 261 V270 M244.500 261 V270"/></g>
<path d="M238 257.500 h1 M240 257.500 h3" stroke="#111" stroke-width="1"/>
<path d="M242 255.500 L244.500 257.500 L242 259.500Z" fill="#111"/>
<path d="M232.500 262 v1 M232.500 264 v3" stroke="#111" stroke-width="1"/>
<path d="M230.500 266.500 L232.500 269.300 L234.500 266.500Z" fill="#111"/>
<!-- display -->
<rect x="234.500" y="314.500" width="10" height="8" fill="#78bce8" stroke="#2c64b0" stroke-width="1"/>
<path d="M235 315.500 h9" stroke="#a8d8f8" stroke-width="1"/>
<path d="M239 316.500 l1.500 1.500 M241.500 318.500 l1.500 1 M240.500 316 l2 0.500" stroke="#1c4890" stroke-width="0.800" fill="none"/>
<rect x="232.300" y="319.800" width="6" height="3.800" rx="1" fill="#f8f8f8" stroke="#9c9c9c" stroke-width="0.700"/>
<path d="M232 325 h6.500" stroke="#111" stroke-width="1.200"/>
<!-- background/border -->
<path d="M233.500 352.500 C236.500 350 242 350.500 243.500 353.500 C244.800 356.500 242.500 358.500 240.500 359.500 C238.500 360.500 238.500 362 237.500 363 C236 364 233.500 363 232.500 360.500 C231.500 358 231 354.800 233.500 352.500Z" fill="none" stroke="#1c58e0" stroke-width="1.700"/>
<path d="M242 364.500 l1.800 -2.300 l1.200 2.600 z" fill="#1040b0"/>
</svg>
<div class="abs" style="left:231px;top:332.500px;width:15px;height:11px;border-radius:50%;background:conic-gradient(from 0deg,#f0e020 0deg,#f86060 50deg,#f040c0 100deg,#8060e0 150deg,#30a0f0 190deg,#30d0c0 230deg,#40d040 280deg,#b0e020 330deg,#f0e020 360deg)"></div>
<div class="abs" style="left:232.500px;top:334.500px;width:12px;height:7.500px;border-radius:50%;background:#f4f8f8"></div>
<svg class="abs" style="left:231px;top:332px" width="16" height="12" viewBox="231 332 16 12"><path d="M233 338 C235.500 334.800 241.500 334.800 244 338" stroke="#101010" stroke-width="1.300" fill="none"/><circle cx="238.600" cy="338.300" r="2.400" fill="#0c3038"/><path d="M233.500 339.500 C236 341.800 241 341.800 243.500 339.500" stroke="#506068" stroke-width="0.600" fill="none"/></svg>
<!-- scrollbar -->
<div class="abs" style="left:584px;top:178px;width:17px;height:263px;background:#f0f0f0;border-left:1px solid #f8f8f8"></div>
<div class="abs" style="left:585px;top:196px;width:15px;height:223px;border:1px solid #8e8e8e;box-shadow:inset 0 0 0 1px rgba(255,255,255,0.600);border-radius:2px;background:linear-gradient(to right,#f4f4f4 0,#e6e6e6 45%,#d0d0d0 55%,#c4c4c4 100%)"></div>
<svg class="abs" style="left:585px;top:178px" width="16" height="263" viewBox="585 178 16 263">
<path d="M589.500 189.300 L593.500 184.800 L597.500 189.300Z" fill="#404040"/>
<path d="M589.500 430.800 L593.500 435 L597.500 430.800Z" fill="#5c5c5c"/>
<linearGradient id="ggrip" x1="0" y1="0" x2="1" y2="0"><stop offset="0" stop-color="#303030"/><stop offset="1" stop-color="#8c8c8c"/></linearGradient><path d="M589 305.500 h7 v0.010 h-7z M589 308.500 h7 v0.010 h-7z M589 311.500 h7 v0.010 h-7z" stroke="#f8f8f8" stroke-width="1"/><rect x="589" y="304" width="7" height="1" fill="url(#ggrip)"/><rect x="589" y="307" width="7" height="1" fill="url(#ggrip)"/><rect x="589" y="310" width="7" height="1" fill="url(#ggrip)"/>
</svg>
<!-- list bottom + all themes -->
<div class="abs" style="left:211px;top:441px;width:390px;height:1px;background:#6c6c6c"></div>
<div class="abs" style="left:211px;top:442px;width:390px;height:16px;background:#fff"></div>
<span class="t" id="at" style="left:213.500px;top:443px;">All Themes</span>
<span class="t" id="ttl" style="left:31px;top:10px;">Form: [Employees]Form2*</span>
</body>
</html>
